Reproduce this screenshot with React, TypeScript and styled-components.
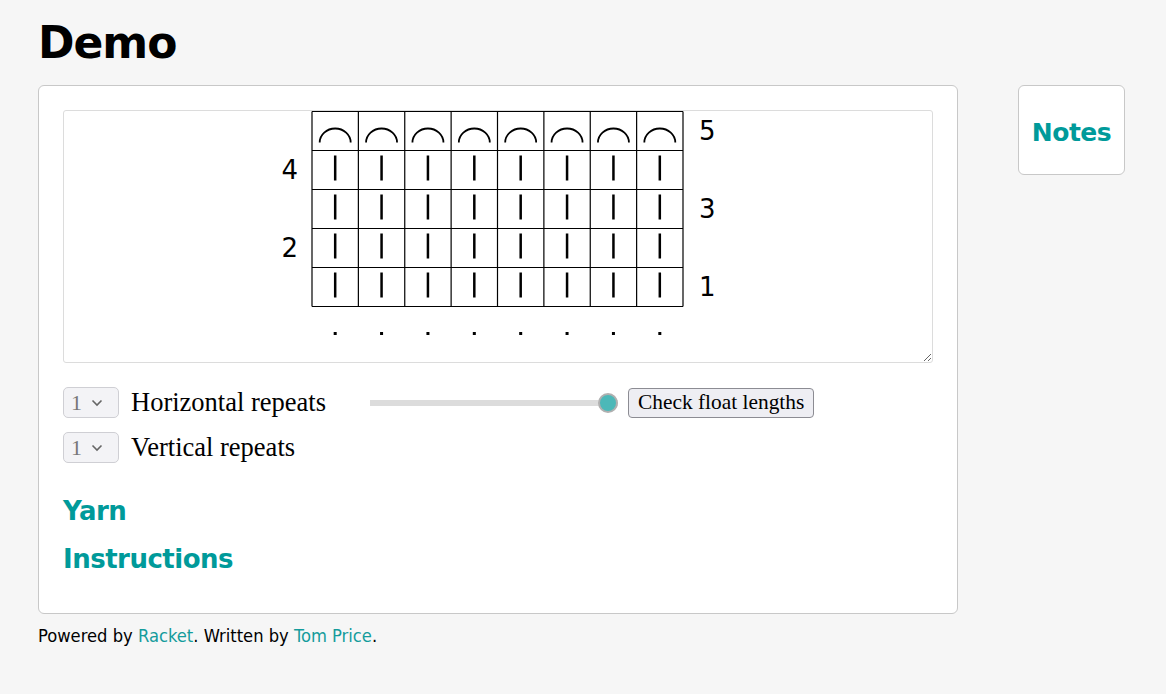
import React from "react";
import styled, { createGlobalStyle } from "styled-components";

const Global = createGlobalStyle`
  html, body { margin: 0; padding: 0; background: #f6f6f6; }
  body { font-family: "DejaVu Sans", Verdana, sans-serif; color: #000; }
`;

const Page = styled.div`
  padding: 0 38px;
`;

const Title = styled.h1`
  margin: 0;
  padding-top: 14px;
  height: 85px;
  box-sizing: border-box;
  font-family: "DejaVu Sans", Verdana, sans-serif;
  font-size: 44px;
  font-weight: bold;
  letter-spacing: -1px;
  line-height: 57px;
`;

const Layout = styled.div`
  display: flex;
  align-items: flex-start;
  gap: 60px;
`;

const Card = styled.div`
  width: 920px;
  height: 529px;
  box-sizing: border-box;
  background: #fff;
  border: 1px solid #c8c8c8;
  border-radius: 6px;
  padding: 24px 24px 0 24px;
`;

const ChartBox = styled.div`
  width: 870px;
  height: 253px;
  box-sizing: border-box;
  border: 1px solid #dcdcdc;
  border-radius: 3px;
  resize: both;
  overflow: hidden;
  display: flex;
  justify-content: center;
`;

const Controls = styled.div`
  margin-top: 24px;
  display: flex;
  flex-direction: column;
  gap: 14px;
`;

const ControlRow = styled.div`
  display: flex;
  align-items: center;
  height: 31px;
`;

const SelectBox = styled.div`
  width: 56px;
  height: 31px;
  box-sizing: border-box;
  background: #f3f3f6;
  border: 1px solid #cfcfd4;
  border-radius: 5px;
  display: flex;
  align-items: center;
  padding-left: 7px;
  gap: 9px;
  font-family: "Liberation Serif", Georgia, serif;
  font-size: 22px;
  color: #777;
`;

const Label = styled.span<{ $w?: number }>`
  font-family: "Liberation Serif", Georgia, serif;
  font-size: 26.5px;
  margin-left: 12px;
  width: ${(p) => (p.$w ? `${p.$w}px` : "auto")};
  flex: none;
`;

const Range = styled.input`
  -webkit-appearance: none;
  appearance: none;
  width: 248px;
  height: 22px;
  margin: 0;
  background: transparent;
  &::-webkit-slider-runnable-track {
    height: 6px;
    background: #dcdcdc;
    border-radius: 0;
  }
  &::-webkit-slider-thumb {
    -webkit-appearance: none;
    width: 20px;
    height: 20px;
    margin-top: -7px;
    border-radius: 50%;
    background: #4cb8b8;
    border: 2px solid #b0b0b0;
    box-sizing: border-box;
  }
`;

const Button = styled.button`
  margin-left: 10px;
  height: 30px;
  padding: 0 9px;
  background: #eeeef3;
  border: 1px solid #8c8c93;
  border-radius: 4px;
  font-family: "Liberation Serif", Georgia, serif;
  font-size: 21.4px;
  color: #000;
`;

const Sections = styled.div`
  margin-top: 30px;
  display: flex;
  flex-direction: column;
  gap: 12px;
`;

const SectionHead = styled.h2`
  margin: 0;
  font-family: "DejaVu Sans", Verdana, sans-serif;
  font-size: 26px;
  font-weight: bold;
  color: #009a9a;
  line-height: 36px;
  letter-spacing: -0.5px;
`;

const NotesCard = styled.div`
  width: 107px;
  height: 90px;
  box-sizing: border-box;
  background: #fff;
  border: 1px solid #c8c8c8;
  border-radius: 6px;
  padding-top: 5px;
  display: flex;
  align-items: center;
  justify-content: center;
`;

const NotesHead = styled(SectionHead)`
  font-size: 25px;
`;

const Footer = styled.p`
  margin: 11px 0 0 0;
  font-family: "DejaVu Sans Condensed", "DejaVu Sans", Verdana, sans-serif;
  font-size: 18.2px;
`;

const Link = styled.a`
  color: #149c9c;
  text-decoration: none;
`;

const COLS = 8;
const ROWS = 5;
const CW = 46.375;
const RH = 39;
const GX = 54;
const GY = 0.5;

function Chart() {
  const cells: React.ReactNode[] = [];
  for (let r = 0; r < ROWS; r++) {
    for (let c = 0; c < COLS; c++) {
      const cx = GX + c * CW + CW / 2;
      const top = GY + r * RH;
      if (r === 0) {
        cells.push(
          <path
            key={`a${r}-${c}`}
            d={`M ${cx - 15.5} ${top + 31} A 15.5 14 0 0 1 ${cx + 15.5} ${top + 31}`}
            fill="none"
            stroke="#000"
            strokeWidth={1.8}
          />
        );
      } else {
        cells.push(
          <line
            key={`l${r}-${c}`}
            x1={cx}
            x2={cx}
            y1={top + 5}
            y2={top + 30}
            stroke="#000"
            strokeWidth={2.5}
          />
        );
      }
    }
  }
  const grid: React.ReactNode[] = [];
  for (let c = 0; c <= COLS; c++) {
    const x = GX + c * CW;
    grid.push(<line key={`v${c}`} x1={x} x2={x} y1={GY} y2={GY + ROWS * RH} stroke="#000" strokeWidth={1.2} />);
  }
  for (let r = 0; r <= ROWS; r++) {
    const y = GY + r * RH;
    grid.push(<line key={`h${r}`} x1={GX} x2={GX + COLS * CW} y1={y} y2={y} stroke="#000" strokeWidth={1.2} />);
  }
  const labels = [5, 4, 3, 2, 1].map((n, r) => {
    const y = GY + r * RH + RH / 2;
    const right = n % 2 === 1;
    return (
      <text
        key={`n${n}`}
        x={right ? GX + COLS * CW + 16 : GX - 14}
        y={y}
        textAnchor={right ? "start" : "end"}
        dominantBaseline="central"
        fontFamily="DejaVu Sans, Verdana, sans-serif"
        fontSize={26}
      >
        {n}
      </text>
    );
  });
  const dots = Array.from({ length: COLS }, (_, c) => (
    <rect key={`d${c}`} x={GX + c * CW + CW / 2 - 1.5} y={221} width={3} height={3} fill="#000" />
  ));
  return (
    <svg width={480} height={250} viewBox="0 0 480 250">
      {grid}
      {cells}
      {labels}
      {dots}
    </svg>
  );
}

function Chevron() {
  return (
    <svg width="12" height="8" viewBox="0 0 12 8">
      <path d="M1.5 1.5 L6 6 L10.5 1.5" fill="none" stroke="#666" strokeWidth="1.6" />
    </svg>
  );
}

export default function App() {
  return (
    <>
      <Global />
      <Page>
        <Title>Demo</Title>
        <Layout>
          <div>
            <Card>
              <ChartBox>
                <Chart />
              </ChartBox>
              <Controls>
                <ControlRow>
                  <SelectBox>
                    1 <Chevron />
                  </SelectBox>
                  <Label $w={239}>Horizontal repeats</Label>
                  <Range type="range" min={0} max={10} defaultValue={10} />
                  <Button>Check float lengths</Button>
                </ControlRow>
                <ControlRow>
                  <SelectBox>
                    1 <Chevron />
                  </SelectBox>
                  <Label>Vertical repeats</Label>
                </ControlRow>
              </Controls>
              <Sections>
                <SectionHead>Yarn</SectionHead>
                <SectionHead>Instructions</SectionHead>
              </Sections>
            </Card>
            <Footer>
              Powered by <Link href="#">Racket</Link>. Written by <Link href="#">Tom Price</Link>.
            </Footer>
          </div>
          <NotesCard>
            <NotesHead>Notes</NotesHead>
          </NotesCard>
        </Layout>
      </Page>
    </>
  );
}
